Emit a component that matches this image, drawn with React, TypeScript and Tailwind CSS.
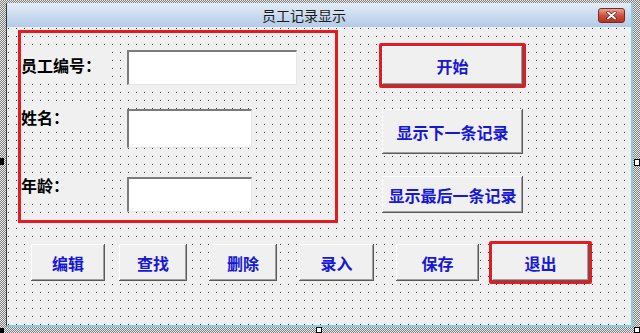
import React from "react";

const FONT = "font-['Noto_Sans_CJK_SC','Noto_Sans',sans-serif]";

const DOTS =
  "bg-[#f0f0f0] bg-[radial-gradient(circle_at_1.5px_1.5px,#3a3a3a_0.55px,transparent_0.7px)] bg-[length:8px_8px]";

const BTN_SHADOW =
  "shadow-[inset_-1px_-1px_#5a5a5a,inset_1px_1px_#ffffff,inset_-2px_-2px_#a0a0a0]";

interface BtnProps {
  label: string;
  className: string;
}

const FormButton: React.FC<BtnProps> = ({ label, className }) => (
  <div
    className={`${className} ${BTN_SHADOW} bg-[#f0f0f0] flex items-center justify-center text-[16px] leading-5 font-bold text-[#1717d6]`}
  >
    {label}
  </div>
);

const Field: React.FC<{ className: string }> = ({ className }) => (
  <div
    className={`${className} bg-white border-t-2 border-l-2 border-r border-b border-t-[#7c7c7c] border-l-[#7c7c7c] border-r-[#e6e6e6] border-b-[#e6e6e6]`}
  />
);

export default function App() {
  return (
    <div
      className={`${FONT} relative w-[640px] h-[333px] flex flex-col pl-[6px] pt-[3px] pr-[7px] pb-[6px] bg-[repeating-conic-gradient(#7d7d7d_0%_25%,#ececec_0%_50%)] bg-[length:2px_2px]`}
    >
      <div className="flex-1 flex flex-col border-l border-l-[#3a3a3a] border-r-2 border-r-[#86cfe6] border-b-2 border-b-[#86cfe6]">
        {/* title bar */}
        <div className="relative h-[24px] flex items-center justify-center pr-[30px] bg-[linear-gradient(to_bottom,#e4ecf7,#b3cbe8)] text-[14px] text-[#1a1a1a]">
          员工记录显示
          <div className="absolute right-[6px] top-[5px] w-[27px] h-[15px] rounded-[3px] border border-[#7a2a22] bg-[linear-gradient(to_bottom,#eba597,#d0523f_50%,#b8301f)] flex items-center justify-center">
            <svg width="11" height="9" viewBox="0 0 11 9">
              <path d="M2 1.5 L9 7.5 M9 1.5 L2 7.5" stroke="#5a1a12" strokeWidth="3.2" strokeLinecap="round" />
              <path d="M2 1.5 L9 7.5 M9 1.5 L2 7.5" stroke="#ffffff" strokeWidth="2" strokeLinecap="round" />
            </svg>
          </div>
        </div>

        {/* form body */}
        <div className={`flex-1 flex flex-col ${DOTS}`}>
          <div className="flex items-start pt-[3px] pl-[11px]">
            {/* left group */}
            <div className="w-[320px] h-[193px] border-[3px] border-[#e31b23] flex flex-col">
              <div className="flex items-start mt-[17px] h-[35px]">
                <div className="w-[106px]">
                  <div className="mt-[2px] w-[90px] h-[30px] pt-[3px] bg-[#f0f0f0] text-[16px] leading-5 font-bold text-black">
                    员工编号：
                  </div>
                </div>
                <Field className="w-[170px] h-[35px]" />
              </div>
              <div className="flex items-start mt-[24px] h-[39px]">
                <div className="w-[106px]">
                  <div className="-mt-[4px] w-[73px] h-[22px] pt-[2px] bg-[#f0f0f0] text-[16px] leading-5 font-bold text-black">
                    姓名：
                  </div>
                </div>
                <Field className="w-[125px] h-[39px]" />
              </div>
              <div className="flex items-start mt-[29px] h-[35px]">
                <div className="w-[106px]">
                  <div className="-mt-[2px] w-[83px] h-[25px] bg-[#f0f0f0] text-[16px] leading-5 font-bold text-black">
                    年龄：
                  </div>
                </div>
                <Field className="w-[125px] h-[35px]" />
              </div>
            </div>

            {/* right column */}
            <div className="ml-[41px] mt-[13px] flex flex-col items-start">
              <div className="border-[3px] border-[#e31b23] rounded-[2px]">
                <FormButton label="开始" className="w-[141px] h-[39px]" />
              </div>
              <FormButton label="显示下一条记录" className="ml-[3px] mt-[21px] w-[141px] h-[45px]" />
              <FormButton label="显示最后一条记录" className="ml-[3px] mt-[22px] w-[141px] h-[37px]" />
            </div>
          </div>

          {/* bottom row */}
          <div className="flex items-center mt-[18px] pl-[24px]">
            <FormButton label="编辑" className="w-[74px] h-[37px]" />
            <FormButton label="查找" className="ml-[14px] w-[68px] h-[37px]" />
            <FormButton label="删除" className="ml-[22px] w-[68px] h-[37px]" />
            <FormButton label="录入" className="ml-[22px] w-[75px] h-[37px]" />
            <FormButton label="保存" className="ml-[22px] w-[83px] h-[37px]" />
            <div className="ml-[10px] border-[3px] border-[#e31b23] rounded-[2px]">
              <FormButton label="退出" className="w-[97px] h-[37px]" />
            </div>
          </div>
        </div>
      </div>

      {/* designer sizing handles */}
      <div className="absolute left-0 top-[158px] w-[4px] h-[7px] bg-black" />
      <div className="absolute right-0 top-[159px] w-[6px] h-[7px] bg-white border border-black" />
      <div className="absolute left-[316px] bottom-0 w-[6px] h-[6px] bg-white border border-black" />
      <div className="absolute right-0 bottom-0 w-[6px] h-[6px] bg-white border border-black" />
      <div className="absolute left-0 bottom-0 w-[4px] h-[5px] bg-black" />
    </div>
  );
}
